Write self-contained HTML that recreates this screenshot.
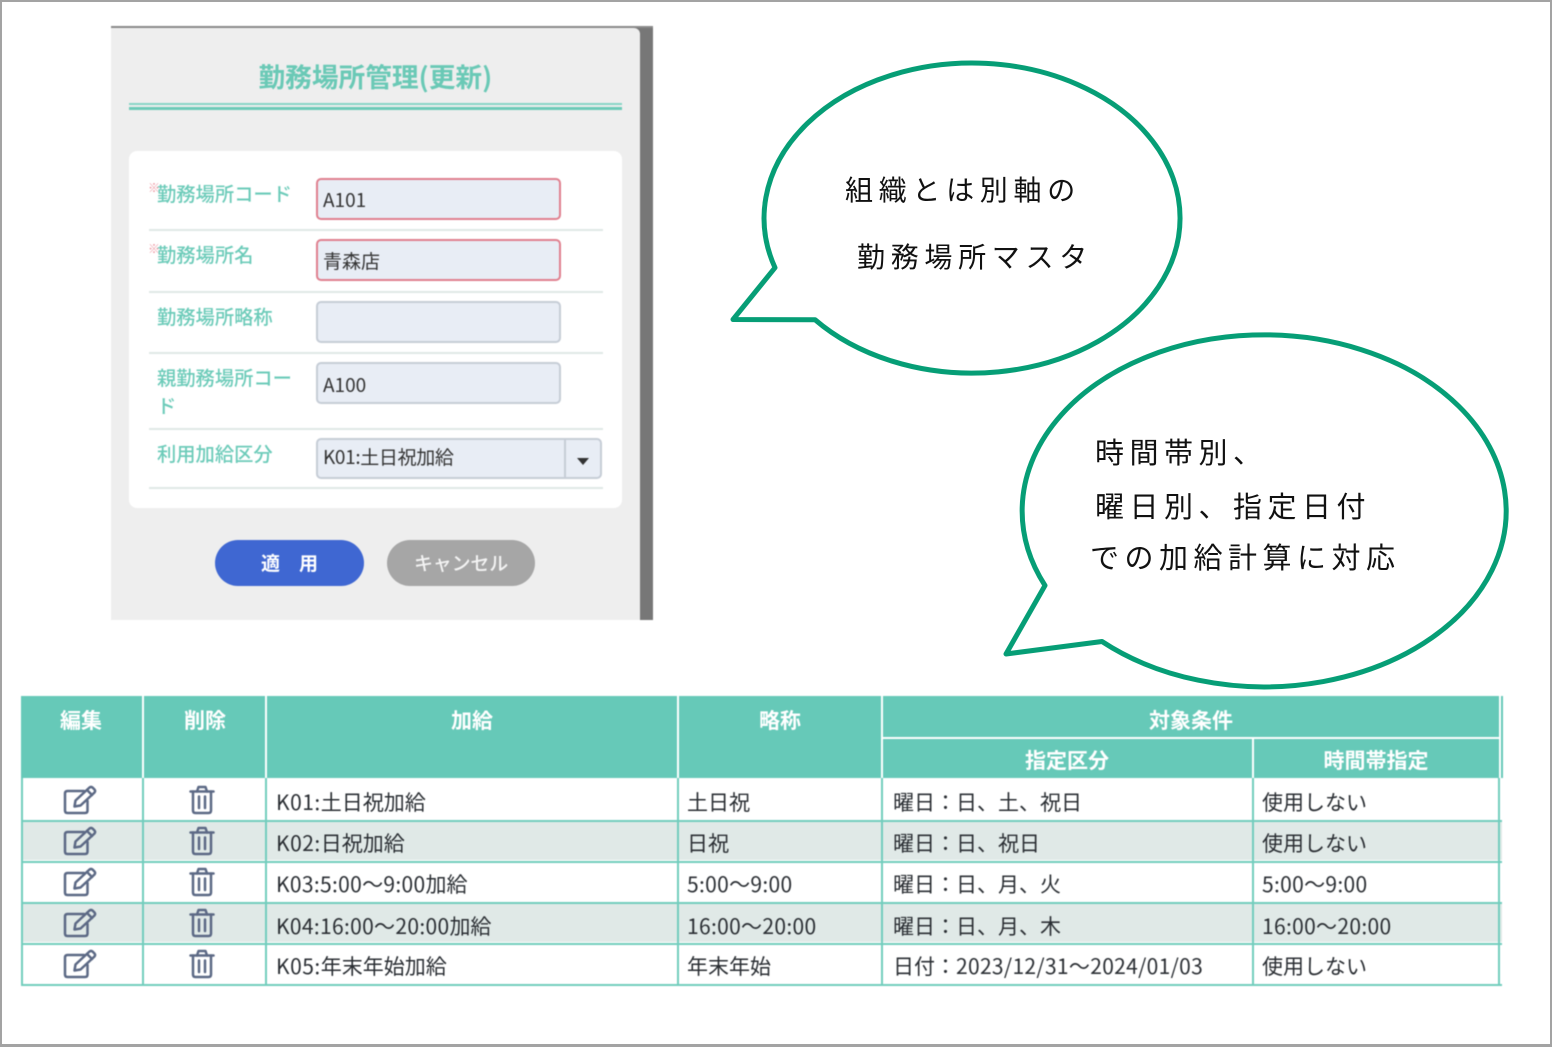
<!DOCTYPE html>
<html lang="ja"><head><meta charset="utf-8"><title>勤務場所管理</title>
<style>
html,body{margin:0;padding:0;background:#fff}
#p{position:relative;width:1552px;height:1047px;overflow:hidden;background:#fff;font-family:"Liberation Sans","Noto Sans CJK JP",sans-serif}
#p *{box-sizing:border-box}
.a{position:absolute}
.t{position:absolute;white-space:nowrap;font-family:"Noto Sans CJK JP",sans-serif;line-height:1}
.soft{position:absolute;left:0;top:0;width:1552px;height:1047px;filter:blur(.55px)}
.lb{color:#6ccbb9;font-size:19.300px;font-weight:500}
.inp{position:absolute;left:316px;width:245px;height:42px;background:#e8edf5;border:2px solid #c6cdd6;border-radius:5px}
.req{border-color:#e0808f}
.v{color:#333;font-size:19px}
.ln{position:absolute;left:149px;width:454px;height:2px;background:#dfe8e6}
.th{color:#fff;font-size:21px;font-weight:700;transform:translateX(-50%)}
.td{color:#2a2e33;font-size:21px}
.n{letter-spacing:.32px}
.vl{position:absolute;width:2px;background:#72cdbd}
.hl{position:absolute;left:21px;width:1481px;height:2px;background:#72cdbd}
.bb{font-size:28px;color:#111;letter-spacing:5.700px;font-weight:400}
.bc{font-size:29px;color:#111;letter-spacing:5.500px;font-weight:400}
</style></head><body><div id="p">
<div class="a" style="left:0;top:0;width:1552px;height:1047px;border:2px solid #a3a3a3;border-bottom-width:3px"></div>

<svg width="0" height="0" style="position:absolute"><defs>
<symbol id="ed" viewBox="0 0 34 30"><g fill="none" stroke="#5c6985" stroke-width="2.500" stroke-linejoin="round" stroke-linecap="round"><path d="M21 6H4.500Q2 6 2 8.500V25.500Q2 28 4.500 28H22Q24.500 28 24.500 25.500V16"/><path d="M11.500 21.500 12.500 15.500 26.500 2.500Q28 1.300 29.500 2.500L31.500 4.500Q32.700 6 31.500 7.500L17.500 20.500Z"/><path d="M24 5 29 10"/></g></symbol>
<symbol id="tr" viewBox="0 0 26 30"><g fill="none" stroke="#5c6985" stroke-width="2.500" stroke-linejoin="round" stroke-linecap="round"><path d="M1.500 6.500H24.500"/><path d="M8 6.500 9.500 2H16.500L18 6.500"/><path d="M4 6.500V25.500Q4 28 6.500 28H19.500Q22 28 22 25.500V6.500"/><path d="M10 11.500V23"/><path d="M16 11.500V23"/></g></symbol>
</defs></svg>

<div class="soft">
<!-- modal -->
<div class="a" style="left:111px;top:26px;width:542px;height:594px;background:#777;border-top:2px solid #8a8a8a"></div>
<div class="a" style="left:111px;top:28px;width:529px;height:592px;background:#eee;border-top-right-radius:6px"></div>
<div class="t" style="left:258.500px;top:63px;font-size:26.700px;font-weight:700;color:#6ac9b6">勤務場所管理(更新)</div>
<div class="a" style="left:129px;top:103px;width:493px;height:2px;background:#86d4c5"></div>
<div class="a" style="left:129px;top:107px;width:493px;height:3px;background:#6ccab8"></div>
<div class="a" style="left:129px;top:151px;width:493px;height:357px;background:#fff;border-radius:8px"></div>

<div class="t" style="left:148px;top:182px;font-size:12px;color:#ee98a3">※</div>
<div class="t lb" style="left:157px;top:183.500px">勤務場所コード</div>
<div class="inp req" style="top:178px"></div>
<div class="t v" style="left:323px;top:190px">A101</div>
<div class="ln" style="top:229px"></div>

<div class="t" style="left:148px;top:243px;font-size:12px;color:#ee98a3">※</div>
<div class="t lb" style="left:157px;top:244.500px">勤務場所名</div>
<div class="inp req" style="top:239px"></div>
<div class="t v" style="left:323px;top:251px">青森店</div>
<div class="ln" style="top:291px"></div>

<div class="t lb" style="left:157px;top:306.500px">勤務場所略称</div>
<div class="inp" style="top:301px"></div>
<div class="ln" style="top:352px"></div>

<div class="t lb" style="left:157px;top:367.500px">親勤務場所コー</div>
<div class="t lb" style="left:157px;top:395.500px">ド</div>
<div class="inp" style="top:362px"></div>
<div class="t v" style="left:323px;top:375px">A100</div>
<div class="ln" style="top:428px"></div>

<div class="t lb" style="left:157px;top:443.500px">利用加給区分</div>
<div class="inp" style="top:438px;width:286px;height:41px"></div>
<div class="a" style="left:564px;top:439px;width:2px;height:39px;background:#c6cdd6"></div>
<div class="a" style="left:577px;top:458px;width:0;height:0;border-left:6px solid transparent;border-right:6px solid transparent;border-top:7px solid #333"></div>
<div class="t v" style="left:323px;top:447px;letter-spacing:-.35px">K01:土日祝加給</div>
<div class="ln" style="top:487px"></div>

<div class="a" style="left:215px;top:540px;width:149px;height:46px;border-radius:23px;background:#3f67d2"></div>
<div class="t" style="left:261px;top:552.500px;font-size:19px;font-weight:700;color:#fff;white-space:pre">適　用</div>
<div class="a" style="left:387px;top:540px;width:148px;height:46px;border-radius:23px;background:#a6a6a6"></div>
<div class="t" style="left:414px;top:552.500px;font-size:19px;font-weight:500;color:#f4f4f4;letter-spacing:-.2px">キャンセル</div>

<!-- table header -->
<div class="a" style="left:21px;top:696px;width:1482px;height:82px;background:#66c9b8"></div>
<div class="a" style="left:142px;top:696px;width:2px;height:82px;background:#fff"></div>
<div class="a" style="left:265px;top:696px;width:2px;height:82px;background:#fff"></div>
<div class="a" style="left:677px;top:696px;width:2px;height:82px;background:#fff"></div>
<div class="a" style="left:881px;top:696px;width:2px;height:82px;background:#fff"></div>
<div class="a" style="left:1251.500px;top:738px;width:2px;height:40px;background:#fff"></div>
<div class="a" style="left:1499px;top:696px;width:2px;height:82px;background:#fff"></div>
<div class="a" style="left:883px;top:736.500px;width:617px;height:2px;background:#fff"></div>
<div class="t th" style="left:81px;top:710px">編集</div>
<div class="t th" style="left:205px;top:710px">削除</div>
<div class="t th" style="left:472px;top:710px">加給</div>
<div class="t th" style="left:780px;top:710px">略称</div>
<div class="t th" style="left:1191px;top:710px">対象条件</div>
<div class="t th" style="left:1067px;top:750px">指定区分</div>
<div class="t th" style="left:1376px;top:750px">時間帯指定</div>

<!-- table rows -->
<div class="a" style="left:21px;top:821px;width:1481px;height:39px;background:#e0e9e7"></div>
<div class="a" style="left:21px;top:903px;width:1481px;height:39px;background:#e0e9e7"></div>
<div class="hl" style="top:819.500px"></div>
<div class="hl" style="top:860.500px"></div>
<div class="hl" style="top:901.500px"></div>
<div class="hl" style="top:942.500px"></div>
<div class="hl" style="top:983.500px"></div>
<div class="vl" style="left:21px;top:778px;height:207px"></div>
<div class="vl" style="left:142px;top:778px;height:207px"></div>
<div class="vl" style="left:265px;top:778px;height:207px"></div>
<div class="vl" style="left:677px;top:778px;height:207px"></div>
<div class="vl" style="left:881px;top:778px;height:207px"></div>
<div class="vl" style="left:1251.500px;top:778px;height:207px"></div>
<div class="vl" style="left:1498px;top:778px;height:207px"></div>

<svg class="a" style="left:63px;top:785px" width="34" height="30"><use href="#ed"/></svg>
<svg class="a" style="left:63px;top:826px" width="34" height="30"><use href="#ed"/></svg>
<svg class="a" style="left:63px;top:867px" width="34" height="30"><use href="#ed"/></svg>
<svg class="a" style="left:63px;top:908px" width="34" height="30"><use href="#ed"/></svg>
<svg class="a" style="left:63px;top:949px" width="34" height="30"><use href="#ed"/></svg>
<svg class="a" style="left:189px;top:785px" width="26" height="30"><use href="#tr"/></svg>
<svg class="a" style="left:189px;top:826px" width="26" height="30"><use href="#tr"/></svg>
<svg class="a" style="left:189px;top:867px" width="26" height="30"><use href="#tr"/></svg>
<svg class="a" style="left:189px;top:908px" width="26" height="30"><use href="#tr"/></svg>
<svg class="a" style="left:189px;top:949px" width="26" height="30"><use href="#tr"/></svg>

<div class="t td" style="left:276px;top:792px"><span style="letter-spacing:.5px">K01:</span>土日祝加給</div>
<div class="t td" style="left:687px;top:792px">土日祝</div>
<div class="t td" style="left:893px;top:792px">曜日：日、土、祝日</div>
<div class="t td" style="left:1262px;top:792px">使用しない</div>

<div class="t td" style="left:276px;top:833px"><span style="letter-spacing:.5px">K02:</span>日祝加給</div>
<div class="t td" style="left:687px;top:833px">日祝</div>
<div class="t td" style="left:893px;top:833px">曜日：日、祝日</div>
<div class="t td" style="left:1262px;top:833px">使用しない</div>

<div class="t td" style="left:276px;top:874px"><span class="n">K03:5:00～9:00</span>加給</div>
<div class="t td n" style="left:687px;top:874px">5:00～9:00</div>
<div class="t td" style="left:893px;top:874px">曜日：日、月、火</div>
<div class="t td n" style="left:1262px;top:874px">5:00～9:00</div>

<div class="t td" style="left:276px;top:916px"><span class="n">K04:16:00～20:00</span>加給</div>
<div class="t td n" style="left:687px;top:916px">16:00～20:00</div>
<div class="t td" style="left:893px;top:916px">曜日：日、月、木</div>
<div class="t td n" style="left:1262px;top:916px">16:00～20:00</div>

<div class="t td" style="left:276px;top:956px"><span style="letter-spacing:.5px">K05:</span>年末年始加給</div>
<div class="t td" style="left:687px;top:956px">年末年始</div>
<div class="t td" style="left:893px;top:956px">日付：<span class="n">2023/12/31～2024/01/03</span></div>
<div class="t td" style="left:1262px;top:956px">使用しない</div>
</div>

<!-- bubbles -->
<svg class="a" style="left:0;top:0" width="1552" height="1047">
<path d="M775 267.700 L733 319.500 L815 319.700 A208 155 0 1 0 775 267.700 Z" fill="#fff" stroke="#069e76" stroke-width="5" stroke-linejoin="round"/>
<path d="M1045 585.500 L1006 654 L1102 641.500 A242 176 0 1 0 1045 585.500 Z" fill="#fff" stroke="#069e76" stroke-width="5" stroke-linejoin="round"/>
</svg>
<div class="t bb" style="left:845px;top:175px">組織とは別軸の</div>
<div class="t bb" style="left:857px;top:242px">勤務場所マスタ</div>
<div class="t bc" style="left:1095px;top:437px">時間帯別、</div>
<div class="t bc" style="left:1095px;top:491px">曜日別、指定日付</div>
<div class="t bc" style="left:1090px;top:542px">での加給計算に対応</div>
</div></body></html>
